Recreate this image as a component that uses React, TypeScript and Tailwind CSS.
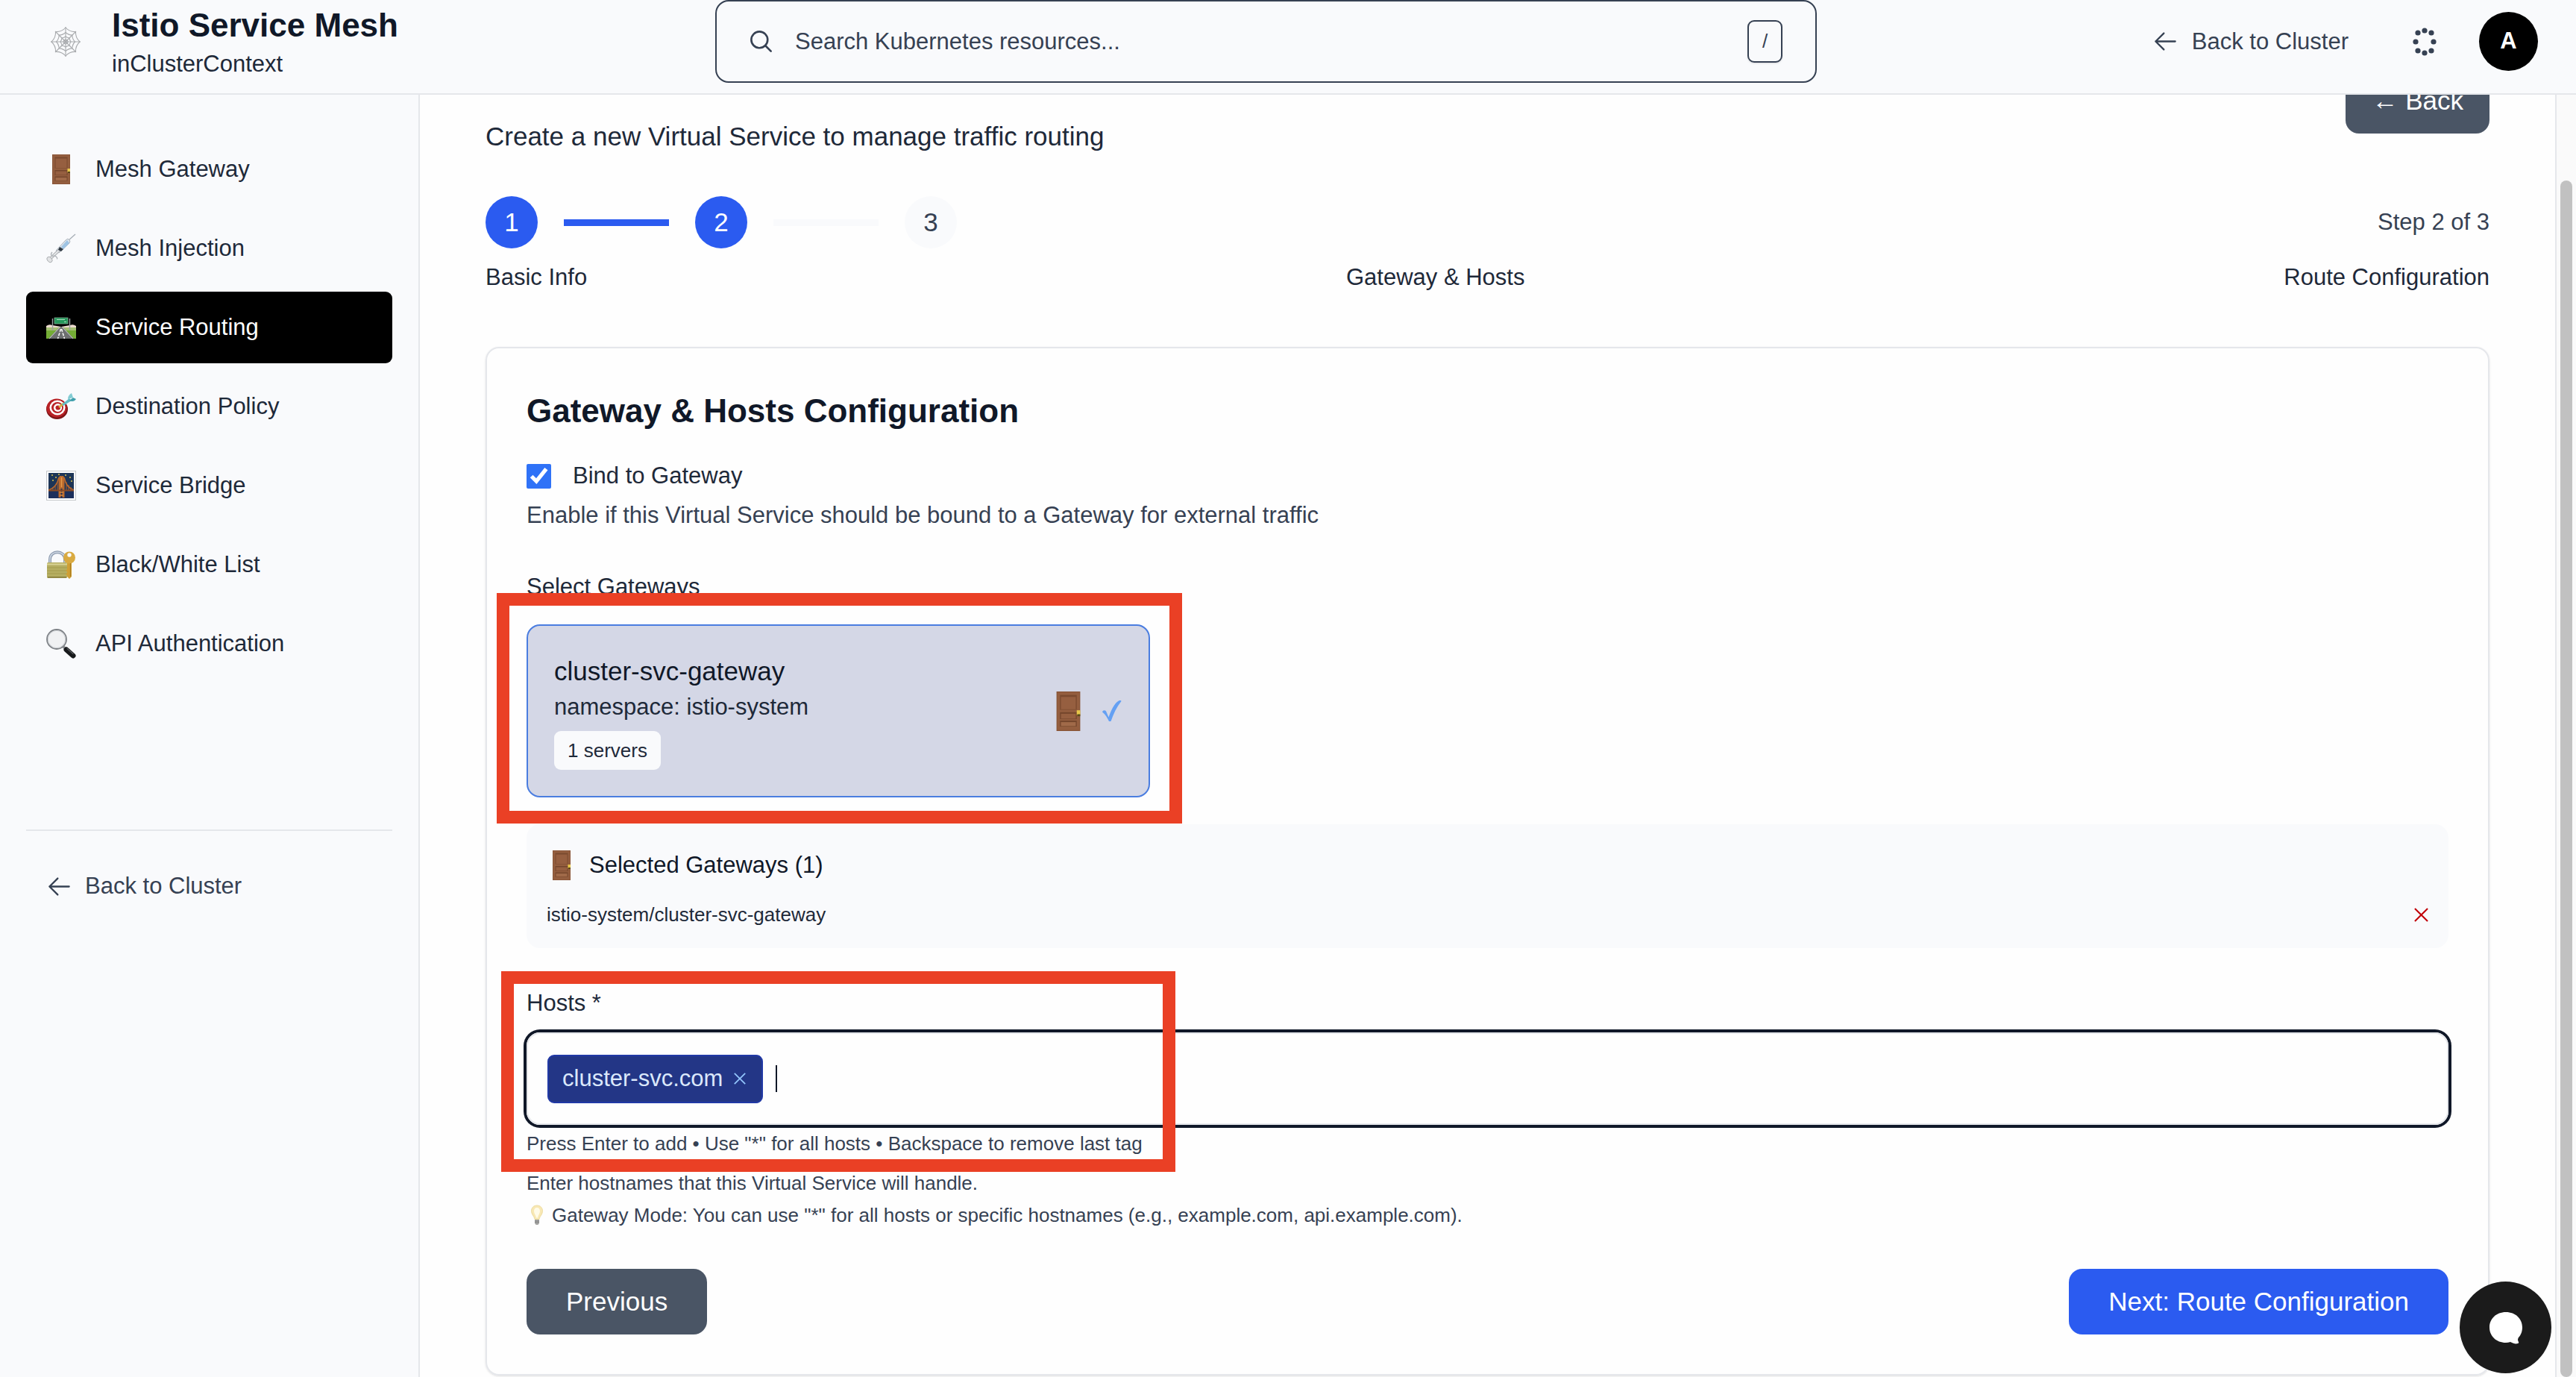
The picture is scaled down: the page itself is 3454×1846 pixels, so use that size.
import React from "react";

type IconProps = { className?: string };

function ArrowLeft({ className = "size-[35px]" }: IconProps) {
  return (
    <svg className={className} viewBox="0 0 24 24" fill="none" stroke="currentColor" strokeWidth="1.6" strokeLinecap="round" strokeLinejoin="round" aria-hidden="true">
      <path d="M10.5 19.5 3 12l7.5-7.5M3 12h18" />
    </svg>
  );
}

function SearchIcon() {
  return (
    <svg className="size-[35px]" viewBox="0 0 24 24" fill="none" stroke="currentColor" strokeWidth="1.8" strokeLinecap="round" strokeLinejoin="round" aria-hidden="true">
      <path d="m21 21-5.197-5.197m0 0A7.5 7.5 0 1 0 5.196 5.196a7.5 7.5 0 0 0 10.607 10.607Z" />
    </svg>
  );
}

function Cross({ className }: IconProps) {
  return (
    <svg className={className} viewBox="0 0 20 20" fill="none" stroke="currentColor" strokeWidth="2.2" aria-hidden="true">
      <path d="M1 1 19 19M19 1 1 19" />
    </svg>
  );
}

function WebIcon() {
  const ring = (r: number, sag: number) => {
    const pt = (i: number, q: number) => {
      const a = (i * Math.PI) / 4;
      return `${(20 + q * Math.sin(a)).toFixed(2)} ${(20 - q * Math.cos(a)).toFixed(2)}`;
    };
    let d = `M${pt(0, r)}`;
    for (let i = 0; i < 8; i++) d += `Q${pt(i + 0.5, r * sag)} ${pt(i + 1, r)}`;
    return d + "Z";
  };
  return (
    <svg className="size-10 shrink-0" viewBox="0 0 40 40" fill="none" stroke="#a9abae" strokeWidth="1.1" aria-hidden="true">
      <path d="M20 0v40M0 20h40M6 6l28 28M34 6 6 34" />
      <path d={ring(19, 0.74)} />
      <path d={ring(12.5, 0.78)} />
      <path d={ring(7, 0.85)} />
      <path d={ring(3, 0.95)} />
    </svg>
  );
}

function Door({ className = "size-10" }: IconProps) {
  return (
    <svg className={className} viewBox="0 0 40 40" aria-hidden="true">
      <rect x="8" y="0" width="24" height="40" fill="#8a5638" />
      <rect x="9" y="1" width="22" height="38" fill="#945e3f" />
      <rect x="11.5" y="3.5" width="17" height="15" fill="#7a4a2f" />
      <rect x="12.5" y="5.5" width="15" height="12.5" fill="#965f40" />
      <rect x="11.5" y="21" width="17" height="7" fill="#74462c" />
      <rect x="12.5" y="22.5" width="15" height="5" fill="#965f40" />
      <rect x="11.5" y="29.5" width="17" height="6" fill="#74462c" />
      <rect x="12.5" y="31" width="15" height="4" fill="#a06a49" />
      <rect x="28.5" y="19" width="3.5" height="5" fill="#e8c84a" />
      <rect x="29" y="23" width="3" height="2" fill="#5b4a1a" />
    </svg>
  );
}

function Syringe() {
  return (
    <svg className="size-10" viewBox="0 0 40 40" aria-hidden="true">
      <path d="M30 9 39 1" stroke="#a7afb6" strokeWidth="1.4" />
      <path d="M13 23 26 9l3-2 3 3-1 3-14 13Z" fill="#dfe7ee" stroke="#a5adb5" strokeWidth="0.9" />
      <path d="m20 18 8-9 3 4-8 8Z" fill="#9fc4e4" />
      <path d="m5 34 15-14" stroke="#b5b8bc" strokeWidth="4" />
      <path d="m6 33 14-13" stroke="#eceef0" strokeWidth="1.6" />
      <path d="m18 18 5 3-3 3-4-2Z" fill="#2f3943" />
      <path d="M8 25c-3 3-1 6 2 5s6 4 4 4" fill="none" stroke="#aeb3b8" strokeWidth="1.3" />
      <ellipse cx="4.5" cy="35" rx="3" ry="4.2" transform="rotate(-42 4.5 35)" fill="#e3e4e6" stroke="#a9acaf" strokeWidth="0.9" />
    </svg>
  );
}

function Road() {
  return (
    <svg className="size-10" viewBox="0 0 40 40" aria-hidden="true">
      <path d="M0 18q4-3 8-1l12 2 12-2q4-2 8 1v4H0Z" fill="#ecd9cf" />
      <path d="M0 20h40v15H0Z" fill="#74ad35" />
      <path d="M0 20h40v4H0Z" fill="#a4bf73" />
      <path d="M18 19h4l15 16H3Z" fill="#6d6f70" />
      <path d="M19 19 4 35M21 19l15 16" stroke="#d2d4d2" strokeWidth="1" />
      <path d="m19.5 22-4 13M20.5 22l4 13" stroke="#fff" strokeWidth="1.5" strokeDasharray="4 1.6" />
      <path d="M8.5 8v16M31.5 8v16" stroke="#9a9fa2" strokeWidth="1.4" />
      <rect x="11" y="7" width="18" height="8" fill="#24985b" stroke="#8fb9a0" strokeWidth="0.7" />
      <path d="M14 9.5h11M24 12.5h3" stroke="#bde5cb" strokeWidth="0.9" />
    </svg>
  );
}

function Target() {
  return (
    <svg className="size-10" viewBox="0 0 40 40" aria-hidden="true">
      <ellipse cx="14.5" cy="23.5" rx="14.5" ry="13.5" fill="#7f1518" />
      <ellipse cx="14" cy="22" rx="13.5" ry="12.5" fill="#b92226" />
      <ellipse cx="15" cy="21.5" rx="10.5" ry="10" fill="#fff" />
      <ellipse cx="15" cy="21.5" rx="8" ry="7.6" fill="#b92226" />
      <ellipse cx="15.5" cy="21.5" rx="5.6" ry="5.4" fill="#fff" />
      <ellipse cx="15.8" cy="21.5" rx="3.3" ry="3.1" fill="#b92226" />
      <path d="m17 21 6-5" stroke="#d9b23c" strokeWidth="2.6" />
      <path d="m21 17 10-8 3 3-11 7Z" fill="#62bcc6" />
      <path d="M29 10c0-4 2-6 5-8l2 6Z" fill="#83ccd3" />
      <path d="m31 12 5-4 4 2c-2 3-5 4-9 2Z" fill="#3f9fac" />
    </svg>
  );
}

function Bridge() {
  return (
    <svg className="size-10" viewBox="0 0 40 40" aria-hidden="true">
      <rect x="0.5" y="0.5" width="39" height="39" fill="#fff" stroke="#c6c8cb" />
      <rect x="3" y="3" width="34" height="34" fill="#1d3557" />
      <rect x="3" y="28" width="34" height="9" fill="#1c2f5c" />
      <path d="M7 6h2M16 5h2M25 6h2M31 9h2M8 13h2M12 9h2M33 14h2" stroke="#d9c04e" strokeWidth="1.6" />
      <path d="M3 26C10 24 15 18 17 9M37 26c-6-2-11-7-13-17" fill="none" stroke="#c0692b" strokeWidth="1.5" />
      <path d="M6 26v-2M9 26v-4M12 26v-7M15 26V15M27 26V15M30 26v-7M33 26v-4" stroke="#b0622c" strokeWidth="1" />
      <path d="M16.5 36V10l1.5-3h5l1.5 3v26h-3V24h-2v12Z" fill="#b9692d" />
      <path d="M20.5 9v13" stroke="#e49a4b" strokeWidth="1.5" />
      <path d="M3 26.5h34" stroke="#8a4a26" strokeWidth="1.8" />
      <path d="M18 29h5M18 33h5" stroke="#d8873a" strokeWidth="1.4" />
    </svg>
  );
}

function LockKey() {
  return (
    <svg className="size-10" viewBox="0 0 40 40" aria-hidden="true">
      <path d="M5 18v-5c0-13 20-13 20 0v5" fill="none" stroke="#8e9cb0" strokeWidth="4" />
      <path d="M5 18v-5c0-13 20-13 20 0v5" fill="none" stroke="#cfd8e4" strokeWidth="1.5" />
      <rect x="1" y="17" width="27" height="21" rx="1.5" fill="#b5ae62" />
      <path d="M1 19.5h27" stroke="#d9d496" strokeWidth="2" />
      <path d="M1 24h27M1 28h27M1 32h27" stroke="#a49c4e" strokeWidth="1" />
      <path d="M2 36.8h25" stroke="#847b3a" strokeWidth="1.5" />
      <path d="M28 16h6v20l-3 3-3-3v-2l-2-1 2-2v-2l-2-1 2-2Z" fill="#cf9f35" />
      <circle cx="31" cy="10.5" r="8" fill="#d9aa41" />
      <circle cx="31" cy="7" r="2.7" fill="#f9fafc" />
      <path d="M32.5 18v18" stroke="#ac7d20" strokeWidth="1.2" />
    </svg>
  );
}

function Magnifier() {
  return (
    <svg className="size-10" viewBox="0 0 40 40" aria-hidden="true">
      <path d="m23 24 5 5" stroke="#8a8d90" strokeWidth="3.5" />
      <path d="m27 28 9 8" stroke="#17191b" strokeWidth="7" strokeLinecap="round" />
      <path d="m28 26.5 8 7" stroke="#5a5d60" strokeWidth="1.2" strokeLinecap="round" />
      <circle cx="14" cy="14" r="13" fill="#f0f1f3" stroke="#7d8186" strokeWidth="1.8" />
      <circle cx="14" cy="14" r="11.6" fill="none" stroke="#cdd0d4" strokeWidth="1" />
    </svg>
  );
}

function Bulb() {
  return (
    <svg className="h-[28px] w-[28px]" viewBox="0 0 28 28" aria-hidden="true">
      <path d="M14 1c-5 0-7.5 3.5-7.5 7.500 0 5 4 7 4.500 11h6c.5-4 4.500-6 4.500-11C21.500 4.500 19 1 14 1Z" fill="#f8e8b4" stroke="#e9d694" strokeWidth="0.8" />
      <path d="M14 4c-2.500 0-4 2-4 4.500 0 3.500 2.500 5.500 3 9h2c.5-3.500 3-5.500 3-9C18 6 16.500 4 14 4Z" fill="#fffbe8" />
      <path d="M11 20h6v4.500L15.500 27h-3L11 24.500Z" fill="#a9a9a6" />
      <path d="M11 22h6M11 24h6" stroke="#77777a" strokeWidth="0.8" />
    </svg>
  );
}

function DotsIcon() {
  const dots = [[0, -15], [9, -12], [12, 0], [9, 12], [0, 15], [-9, 12], [-12, 0], [-9, -12]];
  return (
    <svg className="size-10" viewBox="-20 -20 40 40" fill="currentColor" aria-hidden="true">
      {dots.map(([x, y]) => (
        <circle key={`${x},${y}`} cx={x} cy={y} r="3.6" />
      ))}
    </svg>
  );
}

const navItems = [
  { label: "Mesh Gateway", icon: <Door /> },
  { label: "Mesh Injection", icon: <Syringe /> },
  { label: "Service Routing", icon: <Road />, active: true },
  { label: "Destination Policy", icon: <Target /> },
  { label: "Service Bridge", icon: <Bridge /> },
  { label: "Black/White List", icon: <LockKey /> },
  { label: "API Authentication", icon: <Magnifier /> },
];

function Header() {
  return (
    <header className="shrink-0 border-b-2 border-gray-200 bg-[#f9fafc] pr-[51px] pb-[14px] pl-[68px]">
      <div className="grid h-[111px] grid-cols-[891fr_1477fr_967fr] items-center">
        <div className="flex items-center gap-[42px]">
          <WebIcon />
          <div>
            <h1 className="text-[44px] leading-[60px] font-bold text-gray-900">Istio Service Mesh</h1>
            <p className="text-[31px] leading-[44px]">inClusterContext</p>
          </div>
        </div>
        <label className="flex h-full items-center gap-[28px] rounded-[18px] border-2 border-gray-700 pr-[44px] pl-[42px] text-gray-700">
          <SearchIcon />
          <input
            type="search"
            aria-label="Search Kubernetes resources"
            placeholder="Search Kubernetes resources..."
            className="min-w-0 flex-1 bg-transparent text-[31px] leading-[44px] outline-none placeholder:text-gray-700 placeholder:opacity-100"
          />
          <kbd className="flex h-[57px] w-[47px] items-center justify-center rounded-[9px] border-2 border-gray-700 font-['Liberation_Sans',Arial,sans-serif] text-[26px] shadow-sm">/</kbd>
        </label>
        <div className="flex items-center justify-end text-gray-700">
          <a href="#cluster" className="flex items-center gap-[18px] text-[31px] leading-[44px]">
            <ArrowLeft />
            Back to Cluster
          </a>
          <button type="button" aria-label="Activity" className="mr-[53px] ml-[82px]">
            <DotsIcon />
          </button>
          <button type="button" className="flex size-[79px] items-center justify-center rounded-full bg-black text-[31px] font-bold text-white">A</button>
        </div>
      </div>
    </header>
  );
}

function Sidebar() {
  return (
    <aside className="w-[563px] shrink-0 border-r-2 border-gray-200 bg-[#f9fafc] px-[35px] pt-[52px]">
      <nav className="flex flex-col gap-[10px]">
        {navItems.map((item) => (
          <a
            key={item.label}
            href="#nav"
            aria-current={item.active ? "page" : undefined}
            className={
              item.active
                ? "flex h-[96px] items-center gap-[26px] rounded-[9px] bg-black px-[27px] text-[31px] text-white"
                : "flex h-[96px] items-center gap-[26px] rounded-[9px] px-[27px] text-[31px]"
            }
          >
            {item.icon}
            {item.label}
          </a>
        ))}
      </nav>
      <div className="mt-[201px] border-t-2 border-gray-200 pt-[26px]">
        <a href="#cluster" className="flex h-[96px] items-center gap-[17px] px-[27px] text-[31px] text-gray-700">
          <ArrowLeft />
          Back to Cluster
        </a>
      </div>
    </aside>
  );
}

function Stepper() {
  return (
    <section aria-label="Progress" className="mt-[54px] text-[31px] leading-[44px]">
      <div className="flex items-center justify-between">
        <ol className="flex items-center gap-[35px] text-[35px]">
          <li className="flex size-[70px] items-center justify-center rounded-full bg-[#2b5bf0] text-white">1</li>
          <li aria-hidden="true" className="h-[9px] w-[141px] bg-[#2b5bf0]" />
          <li aria-current="step" className="flex size-[70px] items-center justify-center rounded-full bg-[#2b5bf0] text-white">2</li>
          <li aria-hidden="true" className="h-[9px] w-[141px] bg-[#f9fafc]" />
          <li className="flex size-[70px] items-center justify-center rounded-full bg-[#f9fafc] text-gray-700">3</li>
        </ol>
        <span className="text-gray-700">Step 2 of 3</span>
      </div>
      <div className="mt-[17px] flex justify-between">
        <span>Basic Info</span>
        <span>Gateway &amp; Hosts</span>
        <span>Route Configuration</span>
      </div>
    </section>
  );
}

function GatewaySection() {
  return (
    <div>
      <label className="mt-[34px] flex items-center gap-[29px]">
        <input type="checkbox" defaultChecked className="size-[33px] accent-[#2f72f7]" />
        Bind to Gateway
      </label>
      <p className="mt-[9px] text-gray-700">Enable if this Virtual Service should be bound to a Gateway for external traffic</p>
      <h3 className="mt-[52px]">Select Gateways</h3>
      <div className="mt-[28px] grid grid-cols-3 gap-[35px]">
        <div className="relative">
          <button type="button" aria-pressed="true" className="flex w-full items-center justify-between rounded-[18px] border-2 border-[#4a7de0] bg-[#d4d7e6] p-[35px] text-left">
            <span className="flex flex-col items-start">
              <span className="text-[35px] leading-[52px] text-gray-900">cluster-svc-gateway</span>
              <span>namespace: istio-system</span>
              <span className="mt-[10px] rounded-[9px] bg-[#f9fafc] px-[18px] py-[8px] text-[26px] leading-[36px]">1 servers</span>
            </span>
            <span className="flex items-center gap-[18px]">
              <Door className="size-[53px]" />
              <svg className="size-[28px]" viewBox="0 0 28 28" aria-hidden="true">
                <path d="M1 15.500c1-2.800 4.500-3 5.500 0l3 7C13 13 17 4 23 .5c1.500-.8 3.500-.5 3.500.5C20 9 16 18 12.500 28H10C7.500 23 5.500 19 1 15.500Z" fill="#64a0f3" />
              </svg>
            </span>
          </button>
          <div className="pointer-events-none absolute -top-[42px] -right-[43px] -bottom-[35px] -left-[40px] border-[17px] border-[#ea4025]" />
        </div>
      </div>
      <div className="mt-[36px] rounded-[18px] bg-[#f9fafc] p-[27px]">
        <h4 className="flex h-[56px] items-center gap-[17px] text-gray-900">
          <Door />
          <span>Selected Gateways (1)</span>
        </h4>
        <div className="mt-[20px] flex items-center justify-between text-[26px] leading-[36px]">
          <span>istio-system/cluster-svc-gateway</span>
          <button type="button" aria-label="Remove gateway" className="text-red-700">
            <Cross className="size-[19px]" />
          </button>
        </div>
      </div>
    </div>
  );
}

function HostsSection() {
  return (
    <div>
      <div className="relative mt-[52px]">
        <label htmlFor="hosts" className="block">Hosts *</label>
        <div className="mt-[17px] flex h-[124px] items-center gap-[17px] rounded-[18px] border-2 border-gray-200 px-[26px] ring-4 ring-gray-900">
          <span className="flex h-[65px] items-center rounded-[9px] border-2 border-[#2139a6] bg-[#233686] pr-[21px] pl-[18px] text-[#dbe8fb]">
            cluster-svc.com
            <button type="button" aria-label="Remove host" className="ml-[15px] text-[#93c5fd]">
              <Cross className="size-[16px]" />
            </button>
          </span>
          <span aria-hidden="true" className="h-[36px] w-[2px] bg-gray-900" />
          <input id="hosts" type="text" className="min-w-0 flex-1 bg-transparent caret-transparent outline-none" />
        </div>
        <p className="mt-[7px] text-[26px] leading-[36px] text-gray-700">Press Enter to add • Use "*" for all hosts • Backspace to remove last tag</p>
        <div className="pointer-events-none absolute -top-[21px] -bottom-[20px] -left-[34px] w-[904px] border-[17px] border-[#ea4025]" />
      </div>
      <div className="mt-[17px] text-[26px] leading-[36px] text-gray-700">
        <p>Enter hostnames that this Virtual Service will handle.</p>
        <p className="mt-[7px] flex items-center gap-[6px]">
          <Bulb />
          Gateway Mode: You can use "*" for all hosts or specific hostnames (e.g., example.com, api.example.com).
        </p>
      </div>
    </div>
  );
}

export default function App() {
  return (
    <div className="flex h-screen flex-col overflow-hidden bg-[#fefefe] font-['Liberation_Sans',Arial,sans-serif] text-gray-800">
      <Header />
      <div className="flex min-h-0 flex-1">
        <Sidebar />
        <main className="min-w-0 flex-1 overflow-hidden border-r-2 border-gray-200 px-[88px]">
          <div className="-mt-[36px] flex items-start justify-between text-[35px] leading-[52px]">
            <p className="pt-[66px]">Create a new Virtual Service to manage traffic routing</p>
            <button type="button" className="h-[88px] rounded-[18px] bg-gray-600 px-[35px] text-white">← Back</button>
          </div>
          <Stepper />
          <section className="mt-[71px] rounded-[18px] border-2 border-gray-200 p-[53px] text-[31px] leading-[44px] shadow-sm">
            <h2 className="text-[44px] leading-[62px] font-bold text-gray-900">Gateway &amp; Hosts Configuration</h2>
            <GatewaySection />
            <HostsSection />
            <div className="mt-[54px] flex justify-between text-[35px] leading-[52px] text-white">
              <button type="button" className="h-[88px] rounded-[18px] bg-gray-600 px-[53px]">Previous</button>
              <button type="button" className="h-[88px] rounded-[18px] bg-[#2b5bf0] px-[53px]">Next: Route Configuration</button>
            </div>
          </section>
        </main>
        <div aria-hidden="true" className="flex w-[26px] shrink-0 justify-center bg-[#fafafa] pt-[115px]">
          <div className="w-4 rounded-full bg-[#c1c1c1]" />
        </div>
      </div>
      <button type="button" aria-label="Open chat" className="fixed right-[33px] bottom-[5px] flex size-[123px] items-center justify-center rounded-full bg-[#1b1b1b]">
        <svg className="size-[46px]" viewBox="0 0 46 46" fill="#fff" aria-hidden="true">
          <path d="M23 2C10 2 1 11 1 22.500S10 43 23 43c2 0 4-.5 6-1 4 2 7 3 10 2 2-.5 1-2 .5-3-.8-2-.5-3 .5-5 3-3 5-8 5-13.500C45 11 36 2 23 2Z" />
        </svg>
      </button>
    </div>
  );
}
